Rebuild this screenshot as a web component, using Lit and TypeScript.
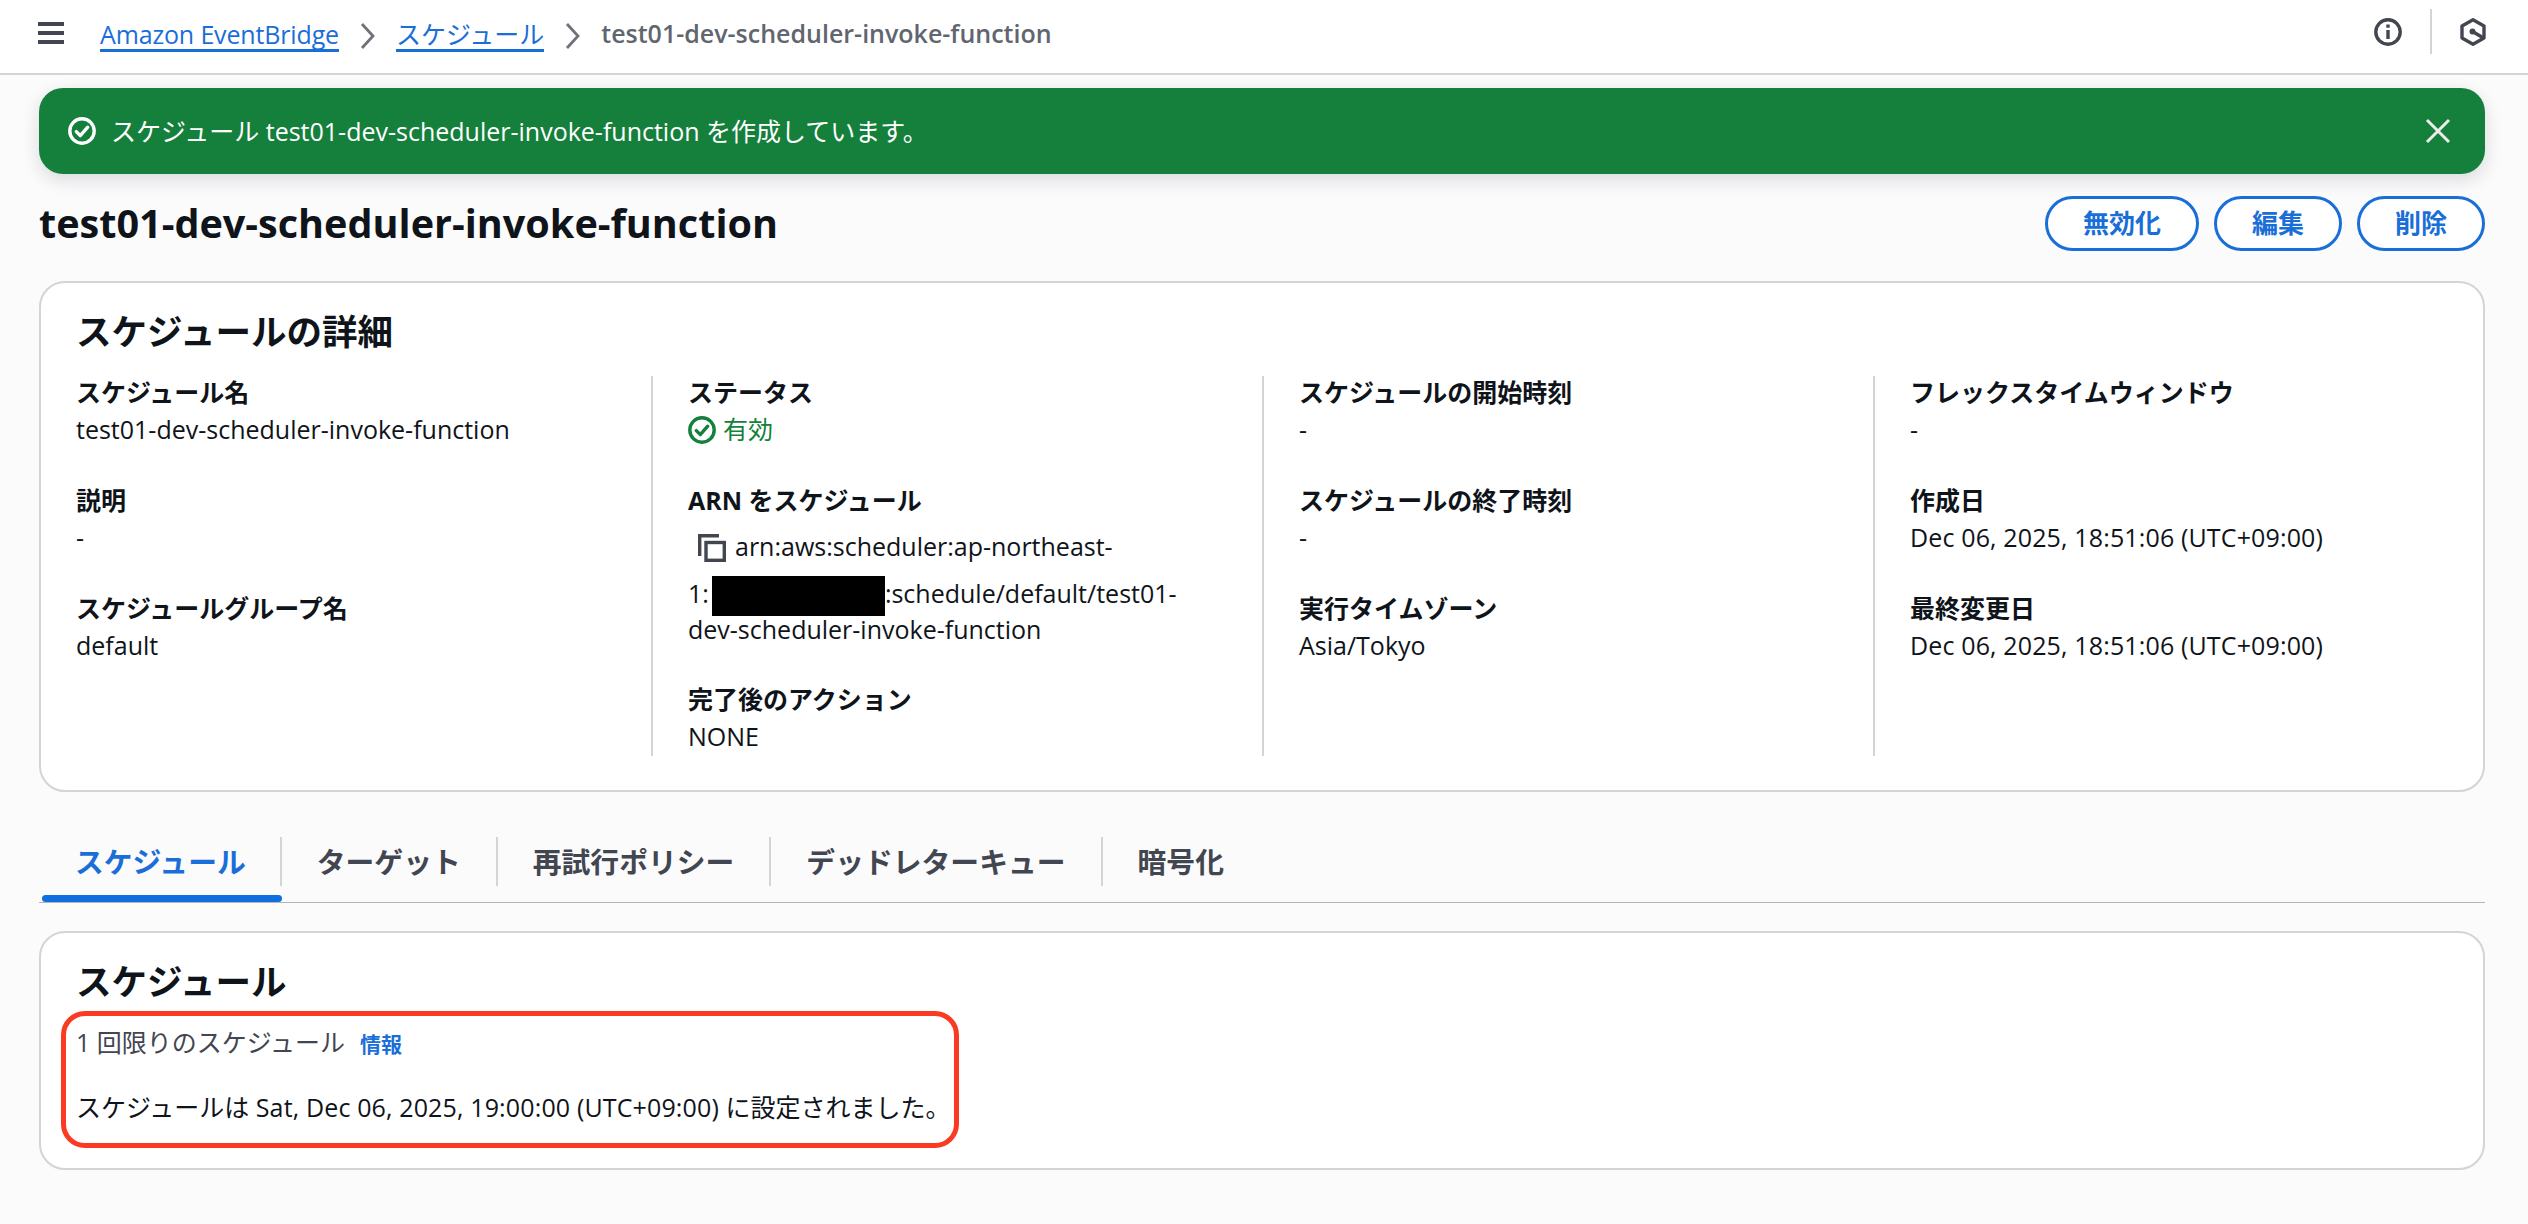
import { LitElement, html, css } from 'lit';
import { customElement } from 'lit/decorators.js';

const checkIcon = html`<svg class="status-icon" viewBox="0 0 28 28" fill="none" stroke="currentColor" stroke-width="3.4">
  <circle cx="14" cy="14" r="12.2"></circle>
  <path d="M8.3 14.6l4 4 7.4-8.4" stroke-linecap="round" stroke-linejoin="round"></path>
</svg>`;

const columns = [
  [
    ['スケジュール名', 'test01-dev-scheduler-invoke-function'],
    ['説明', '-'],
    ['スケジュールグループ名', 'default'],
  ],
  null,
  [
    ['スケジュールの開始時刻', '-'],
    ['スケジュールの終了時刻', '-'],
    ['実行タイムゾーン', 'Asia/Tokyo'],
  ],
  [
    ['フレックスタイムウィンドウ', '-'],
    ['作成日', 'Dec 06, 2025, 18:51:06 (UTC+09:00)'],
    ['最終変更日', 'Dec 06, 2025, 18:51:06 (UTC+09:00)'],
  ],
];

const tabs = ['スケジュール', 'ターゲット', '再試行ポリシー', 'デッドレターキュー', '暗号化'];

@customElement('app-root')
export class AppRoot extends LitElement {
  static styles = css`
    :host {
      display: block;
      min-height: 1224px;
      background: #fbfbfc;
      color: #0f141a;
      font-family: 'Open Sans', 'Noto Sans CJK JP', sans-serif;
      font-size: 25px;
      line-height: 37px;
    }
    .topbar {
      display: flex;
      align-items: center;
      height: 73px;
      background: #fff;
      border-bottom: 2px solid #d3d4d9;
      padding: 0 41px 0 38px;
      box-sizing: content-box;
    }
    .burger {
      width: 26px;
      height: 22px;
      margin-right: 36px;
      margin-top: -8px;
      background: linear-gradient(#424650 0 4px, transparent 4px 9px, #424650 9px 13px, transparent 13px 18px, #424650 18px 22px);
    }
    .crumb {
      color: #1a6ed8;
      border-bottom: 3px solid #1a6ed8;
      line-height: 30px;
      margin-top: -2px;
    }
    .crumb-wide {
      letter-spacing: -0.15px;
    }
    .chevron {
      width: 15px;
      height: 26px;
      margin: -2px 21px 0;
      fill: none;
      stroke: #6f727b;
      stroke-width: 2.8;
    }
    .crumb-current {
      color: #5f6670;
      font-weight: 600;
      margin-top: -7px;
    }
    .top-right {
      margin-left: auto;
      display: flex;
      align-items: center;
      margin-top: -10px;
      color: #424650;
    }
    .top-right svg {
      display: block;
      width: 28px;
      height: 28px;
      fill: none;
      stroke: currentColor;
    }
    .top-sep {
      width: 2px;
      height: 45px;
      background: #d3d4d9;
      margin: 0 27px 0 28px;
    }
    main {
      padding: 13px 43px 0 39px;
    }
    .flash {
      display: flex;
      align-items: center;
      height: 86px;
      padding: 0 34px 0 29px;
      background: #157f3c;
      border-radius: 24px;
      color: #fff;
      box-shadow: 0 6px 18px rgba(15, 20, 26, 0.14);
    }
    .status-icon {
      width: 28px;
      height: 28px;
      flex: none;
    }
    .flash-text {
      margin-left: 15px;
    }
    .flash-close {
      margin-left: auto;
      width: 26px;
      height: 26px;
      fill: none;
      stroke: #ececec;
      stroke-width: 3;
    }
    .title-row {
      display: flex;
      align-items: center;
      justify-content: space-between;
      margin: 22px 0 30px;
    }
    h1 {
      margin: 0;
      font-size: 39.6px;
      line-height: 55px;
      font-weight: 700;
    }
    .actions {
      display: flex;
      gap: 15px;
    }
    .btn {
      box-sizing: border-box;
      height: 55px;
      line-height: 49px;
      padding: 0 35px;
      border: 3px solid #1a6ed8;
      border-radius: 28px;
      color: #1a6ed8;
      font-size: 26px;
      font-weight: 700;
      background: #fff;
    }
    .card {
      background: #fff;
      border: 2px solid #d3d4d9;
      border-radius: 26px;
      padding: 26px 36px 34px 35px;
      position: relative;
    }
    h2 {
      margin: 0;
      font-size: 35.5px;
      line-height: 44px;
      font-weight: 700;
    }
    .detail-grid {
      display: grid;
      grid-template-columns: 575px 611px 611px 1fr;
      margin-top: 23px;
      height: 380px;
    }
    .col + .col {
      border-left: 2px solid #d3d4d9;
      padding-left: 35px;
    }
    .item {
      margin-bottom: 34px;
    }
    .item:first-child {
      margin-top: -2px;
    }
    .item:last-child {
      margin-bottom: 0;
    }
    .label {
      font-weight: 700;
    }
    .stamp {
      letter-spacing: 0.14px;
    }
    .value-ok {
      display: flex;
      align-items: center;
      gap: 7px;
      color: #157f3c;
    }
    .arn {
      line-height: 35px;
      margin-bottom: 2px;
    }
    .arn-first {
      display: block;
      line-height: 55px;
      margin-bottom: 2px;
    }
    .copy {
      width: 28px;
      height: 28px;
      margin-left: 10px;
      margin-right: 9px;
      vertical-align: -6px;
      fill: none;
      stroke: #424650;
      stroke-width: 3.4;
    }
    .redacted {
      display: inline-block;
      width: 173px;
      height: 40px;
      margin: -4px 0 -4px 3px;
      background: #000;
      vertical-align: middle;
    }
    .tabs {
      display: flex;
      margin-top: 45px;
      padding-left: 3px;
      border-bottom: 1px solid #b4b5bc;
      font-size: 28.8px;
      font-weight: 700;
      color: #424650;
    }
    .tab-label {
      display: block;
      line-height: 49px;
      padding: 0 35px;
      border-right: 2px solid #d3d4d9;
    }
    .tab:first-child .tab-label {
      padding: 0 34px 0 33px;
    }
    .tab:last-child .tab-label {
      border-right: 0;
    }
    .tab-bar {
      height: 7px;
      margin-top: 9px;
      border-radius: 4px;
    }
    .tab.active {
      color: #1a6ed8;
    }
    .tab.active .tab-bar {
      background: #0f6fde;
    }
    .schedule-card {
      margin-top: 28px;
      height: 239px;
      box-sizing: border-box;
    }
    .kind {
      margin-top: 21px;
      color: #424650;
    }
    .info-link {
      margin-left: 15px;
      color: #1a6ed8;
      font-size: 21px;
      font-weight: 700;
    }
    .sentence {
      margin-top: 26px;
    }
    .highlight {
      position: absolute;
      left: 20px;
      top: 78px;
      width: 898px;
      height: 137px;
      box-sizing: border-box;
      border: 5px solid #fa3a22;
      border-radius: 24px;
    }
  `;

  renderArnColumn() {
    return html`<div class="col">
      <div class="item">
        <div class="label">ステータス</div>
        <div class="value-ok">${checkIcon}<span>有効</span></div>
      </div>
      <div class="item">
        <div class="label">ARN をスケジュール</div>
        <div class="arn">
          <span class="arn-first"><svg class="copy" viewBox="0 0 28 28"><path d="M1.7 22V1.7H21"></path><rect x="8" y="8.5" width="18.3" height="17.8"></rect></svg>arn:aws:scheduler:ap-northeast-</span>
          1:<span class="redacted"></span>:schedule/default/test01-<br>dev-scheduler-invoke-function
        </div>
      </div>
      <div class="item">
        <div class="label">完了後のアクション</div>
        <div>NONE</div>
      </div>
    </div>`;
  }

  render() {
    return html`
      <header class="topbar">
        <div class="burger"></div>
        <span class="crumb crumb-wide">Amazon EventBridge</span>
        <svg class="chevron" viewBox="0 0 15 26"><path d="M2 1l11 12L2 25"></path></svg>
        <span class="crumb">スケジュール</span>
        <svg class="chevron" viewBox="0 0 15 26"><path d="M2 1l11 12L2 25"></path></svg>
        <span class="crumb-current">test01-dev-scheduler-invoke-function</span>
        <div class="top-right">
          <svg viewBox="0 0 28 28" stroke-width="3.4">
            <circle cx="14" cy="14" r="12.2"></circle>
            <path d="M14 12v9M14 6.5v3.2"></path>
          </svg>
          <div class="top-sep"></div>
          <svg viewBox="0 0 28 28" stroke-width="3.4">
            <path d="M14 1.8l11 6.2v12l-11 6.2L3 20V8z" stroke-linejoin="round"></path>
            <circle cx="13.5" cy="13.5" r="3" fill="currentColor" stroke="none"></circle>
            <path d="M13.5 13.5l11 6.5"></path>
          </svg>
        </div>
      </header>
      <main>
        <div class="flash">
          ${checkIcon}
          <span class="flash-text">スケジュール test01-dev-scheduler-invoke-function を作成しています。</span>
          <svg class="flash-close" viewBox="0 0 26 26"><path d="M2 2l22 22M24 2L2 24"></path></svg>
        </div>
        <div class="title-row">
          <h1>test01-dev-scheduler-invoke-function</h1>
          <div class="actions">
            <span class="btn">無効化</span>
            <span class="btn">編集</span>
            <span class="btn">削除</span>
          </div>
        </div>
        <section class="card">
          <h2>スケジュールの詳細</h2>
          <div class="detail-grid">
            ${columns.map(col =>
              col === null
                ? this.renderArnColumn()
                : html`<div class="col">
                    ${col.map(
                      ([label, value]) => html`<div class="item">
                        <div class="label">${label}</div>
                        <div class=${value.startsWith('Dec') ? 'stamp' : ''}>${value}</div>
                      </div>`
                    )}
                  </div>`
            )}
          </div>
        </section>
        <nav class="tabs">
          ${tabs.map(
            (t, i) => html`<div class="tab ${i === 0 ? 'active' : ''}">
              <span class="tab-label">${t}</span>
              <div class="tab-bar"></div>
            </div>`
          )}
        </nav>
        <section class="card schedule-card">
          <h2>スケジュール</h2>
          <div class="kind">1 回限りのスケジュール<span class="info-link">情報</span></div>
          <div class="sentence">スケジュールは <span class="stamp">Sat, Dec 06, 2025, 19:00:00 (UTC+09:00)</span> に設定されました。</div>
          <div class="highlight"></div>
        </section>
      </main>
    `;
  }
}
